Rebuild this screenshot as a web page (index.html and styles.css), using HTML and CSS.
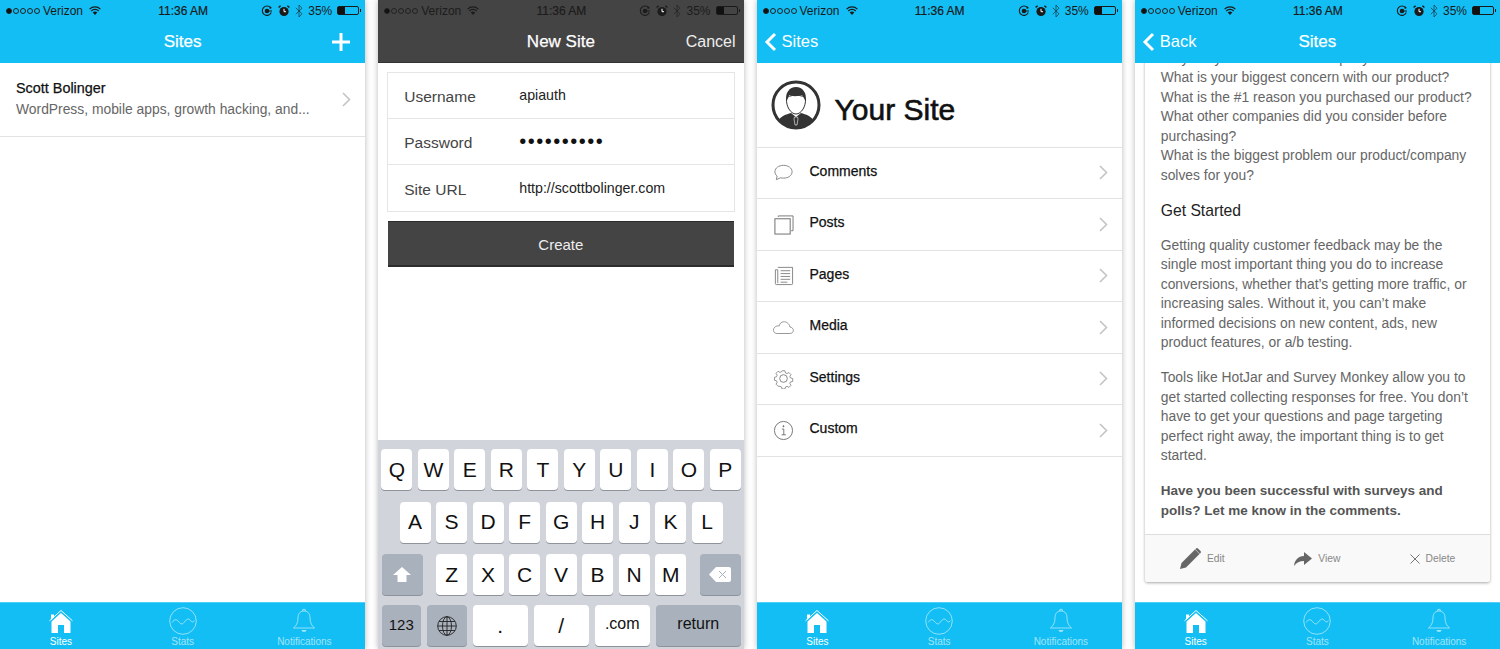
FILE: index.html
```html
<!DOCTYPE html>
<html lang="en">
<head>
  <meta charset="UTF-8">
  <meta name="viewport" content="width=device-width, initial-scale=1.0">
  <title>Site manager app screens</title>
  <link rel="stylesheet" href="styles.css">
</head>
<body>
  <svg class="defs" width="0" height="0">
    <symbol id="wifi" viewBox="0 0 12 9">
      <path d="M.6 3.2a7.6 7.6 0 0 1 10.8 0M2.3 5a5.2 5.2 0 0 1 7.4 0" fill="none" stroke="currentColor" stroke-width="1.2"/>
      <path d="M6 9 3.700 6.600a3.300 3.300 0 0 1 4.600 0z" fill="currentColor"/>
    </symbol>
    <symbol id="lock" viewBox="0 0 12 12">
      <path d="M10.3 7.6A4.7 4.7 0 1 1 9.6 2.6" fill="none" stroke="currentColor" stroke-width="1.1"/>
      <path d="M8.6 1 11 3 8.6 4z" fill="currentColor"/>
      <circle cx="6" cy="6" r="2.3" fill="currentColor"/>
      <path d="M7 6h4" stroke="currentColor" stroke-width="1"/>
    </symbol>
    <symbol id="alarm" viewBox="0 0 12 12">
      <circle cx="6" cy="6.5" r="4.6" fill="currentColor"/>
      <path d="M6 3.8v2.9h2" fill="none" stroke="#fff" stroke-width="1"/>
      <path d="M.6 2.6 2.6.8M11.4 2.6 9.4.8" stroke="currentColor" stroke-width="1.4"/>
    </symbol>
    <symbol id="bluetooth" viewBox="0 0 8 14">
      <path d="M.8 3.800 7 9.800 4 13V1l3 3.200L.8 10.200" fill="none" stroke="currentColor" stroke-width="1" opacity=".6"/>
    </symbol>
    <symbol id="chevron" viewBox="0 0 9 15">
      <path d="M1 1l6.500 6.500L1 14" fill="none" stroke="#c4c4c4" stroke-width="1.600"/>
    </symbol>
    <symbol id="back" viewBox="0 0 13 20">
      <path d="M11 2 3 10l8 8" fill="none" stroke="#fff" stroke-width="3"/>
    </symbol>
    <symbol id="home" viewBox="-2 -2 28 28">
      <path d="M.5 11.800 12 1.500l11.500 10.300" fill="none" stroke="currentColor" stroke-width="1"/>
      <path d="M2 5.500h3v2.800L2 11z" fill="currentColor"/>
      <path d="M12 4 21.500 12.500V24H15v-8H9v8H2.500V12.500z" fill="currentColor"/>
    </symbol>
    <symbol id="stats" viewBox="0 0 28 28">
      <circle cx="14" cy="14" r="13.300" fill="none" stroke="currentColor" stroke-width=".9"/>
      <path d="M3 15.500c2.500-3.500 4.500-3.500 6.500-1s3.500 3.500 5.500 1 4-5 6-2.500 3 2.500 4.500.5" fill="none" stroke="currentColor" stroke-width=".9"/>
    </symbol>
    <symbol id="bell" viewBox="-2 -1 28 28">
      <path d="M12 3C7.500 3 6 6.500 6 10c0 5-2 8-4.500 10h21C20 18 18 15 18 10c0-3.500-1.500-7-6-7z" fill="none" stroke="currentColor" stroke-width=".9"/>
      <path d="M10.800 3a1.300 1.300 0 1 1 2.400 0" fill="none" stroke="currentColor" stroke-width=".9"/>
      <path d="M9.500 22h5a2.500 2 0 0 1-5 0z" fill="currentColor"/>
    </symbol>
  </svg>

  <div class="screens">

    <!-- Sites list -->
    <section class="phone">
      <header class="top">
        <div class="status">
          <div class="status-left"><span class="dots"><i class="on"></i><i></i><i></i><i></i><i></i></span><span>Verizon</span><svg class="ic-wifi"><use href="#wifi"/></svg></div>
          <div class="status-time">11:36 AM</div>
          <div class="status-right"><svg class="ic-s"><use href="#lock"/></svg><svg class="ic-s"><use href="#alarm"/></svg><svg class="ic-bt"><use href="#bluetooth"/></svg><span>35%</span><span class="battery"><b></b></span></div>
        </div>
        <div class="nav">
          <span class="nav-side"></span>
          <span class="nav-title">Sites</span>
          <span class="nav-side right"><svg class="ic-plus" viewBox="0 0 18 18"><path d="M9 0v18M0 9h18" stroke="#fff" stroke-width="3"/></svg></span>
        </div>
      </header>
      <main class="body">
        <div class="site-row">
          <div class="site-text">
            <div class="site-name">Scott Bolinger</div>
            <div class="site-desc">WordPress, mobile apps, growth hacking, and...</div>
          </div>
          <svg class="chevron"><use href="#chevron"/></svg>
        </div>
      </main>
      <nav class="tabs">
        <div class="tab active"><svg class="tab-icon"><use href="#home"/></svg><span>Sites</span></div>
        <div class="tab"><svg class="tab-icon"><use href="#stats"/></svg><span>Stats</span></div>
        <div class="tab"><svg class="tab-icon"><use href="#bell"/></svg><span>Notifications</span></div>
      </nav>
    </section>

    <!-- New site form -->
    <section class="phone">
      <header class="top dark">
        <div class="status">
          <div class="status-left"><span class="dots"><i class="on"></i><i></i><i></i><i></i><i></i></span><span>Verizon</span><svg class="ic-wifi"><use href="#wifi"/></svg></div>
          <div class="status-time">11:36 AM</div>
          <div class="status-right"><svg class="ic-s"><use href="#lock"/></svg><svg class="ic-s"><use href="#alarm"/></svg><svg class="ic-bt"><use href="#bluetooth"/></svg><span>35%</span><span class="battery"><b></b></span></div>
        </div>
        <div class="nav">
          <span class="nav-side"></span>
          <span class="nav-title">New Site</span>
          <span class="nav-side right"><span class="nav-cancel">Cancel</span></span>
        </div>
      </header>
      <main class="body form-body">
        <div class="form-card">
          <div class="form-row"><span class="form-label">Username</span><span class="form-value">apiauth</span></div>
          <div class="form-row"><span class="form-label">Password</span><span class="form-value pass">••••••••••</span></div>
          <div class="form-row"><span class="form-label">Site URL</span><span class="form-value">http://scottbolinger.com</span></div>
        </div>
        <div class="create-btn">Create</div>
      </main>
      <div class="keyboard">
        <div class="kb-row">
          <span class="key">Q</span><span class="key">W</span><span class="key">E</span><span class="key">R</span><span class="key">T</span><span class="key">Y</span><span class="key">U</span><span class="key">I</span><span class="key">O</span><span class="key">P</span>
        </div>
        <div class="kb-row">
          <span class="key">A</span><span class="key">S</span><span class="key">D</span><span class="key">F</span><span class="key">G</span><span class="key">H</span><span class="key">J</span><span class="key">K</span><span class="key">L</span>
        </div>
        <div class="kb-row split">
          <span class="key fn wide"><svg class="kb-shift" viewBox="0 0 18 15"><path d="M9 0 18 8h-4.500v7h-9V8H0z" fill="#fff"/></svg></span>
          <div class="kb-group">
            <span class="key">Z</span><span class="key">X</span><span class="key">C</span><span class="key">V</span><span class="key">B</span><span class="key">N</span><span class="key">M</span>
          </div>
          <span class="key fn wide"><svg class="kb-del" viewBox="0 0 22 15"><path d="M7 0h13a2 2 0 0 1 2 2v11a2 2 0 0 1-2 2H7L0 7.500z" fill="#fff"/><path d="M10 4l7 7M17 4l-7 7" stroke="#a9b1bc" stroke-width="1"/></svg></span>
        </div>
        <div class="kb-row bottom">
          <span class="key fn small k-123">123</span>
          <span class="key fn k-globe"><svg class="kb-globe" viewBox="0 0 20 20" fill="none" stroke="#222" stroke-width=".9"><circle cx="10" cy="10" r="9.300"/><ellipse cx="10" cy="10" rx="4.500" ry="9.300"/><path d="M10 .7v18.600M.7 10h18.600M2 5.500h16M2 14.500h16"/></svg></span>
          <span class="key k-dot">.</span>
          <span class="key k-slash">/</span>
          <span class="key small k-com">.com</span>
          <span class="key fn small k-return">return</span>
        </div>
      </div>
    </section>

    <!-- Site menu -->
    <section class="phone">
      <header class="top">
        <div class="status">
          <div class="status-left"><span class="dots"><i class="on"></i><i></i><i></i><i></i><i></i></span><span>Verizon</span><svg class="ic-wifi"><use href="#wifi"/></svg></div>
          <div class="status-time">11:36 AM</div>
          <div class="status-right"><svg class="ic-s"><use href="#lock"/></svg><svg class="ic-s"><use href="#alarm"/></svg><svg class="ic-bt"><use href="#bluetooth"/></svg><span>35%</span><span class="battery"><b></b></span></div>
        </div>
        <div class="nav">
          <span class="nav-side"><svg class="ic-back"><use href="#back"/></svg><span class="nav-link">Sites</span></span>
          <span class="nav-title"></span>
          <span class="nav-side right"></span>
        </div>
      </header>
      <main class="body">
        <div class="site-head">
          <svg class="avatar" viewBox="0 0 50 50">
            <circle cx="25" cy="25" r="23" fill="#fff" stroke="#333" stroke-width="3"/>
            <path d="M8 40c2-4 7-5.500 12-7l5 4 5-4c5 1.500 10 3 12 7a23 23 0 0 1-34 0z" fill="#333"/>
            <path d="M15.500 19c-.5 7 4 15 9.500 15s10-8 9.500-15c-.5-5-18.500-5-19 0z" fill="#fff" stroke="#333" stroke-width="1"/>
            <path d="M15.500 22c-2-9 3-15 9.500-15s11.500 6 9.500 15c-1-3-2-6-4-7-3 1.500-10 1.500-12 0-1 1-2 4-3 7z" fill="#333"/>
            <path d="M23.500 37h3l.5 2-1 6h-2l-1-6z" fill="#333" stroke="#fff" stroke-width=".6"/>
          </svg>
          <h1 class="site-title">Your Site</h1>
        </div>
        <div class="menu-row">
          <svg class="menu-icon" viewBox="0 0 22 22" fill="none" stroke="#777" stroke-width=".9"><path d="M11 3.500c5 0 9 2.800 9 6.700s-4 6.700-9 6.700c-1 0-2.200-.1-3.200-.4L3.500 18.500l.8-3.800C2.800 13.500 2 12 2 10.200c0-3.900 4-6.700 9-6.700z"/></svg>
          <span class="menu-label">Comments</span>
          <svg class="chevron"><use href="#chevron"/></svg>
        </div>
        <div class="menu-row">
          <svg class="menu-icon" viewBox="0 0 22 22" fill="none" stroke="#777" stroke-width="1"><path d="M5.500 3V2h15.500v15.500h-2"/><rect x="2" y="5" width="16" height="16" stroke-width="1.100"/></svg>
          <span class="menu-label">Posts</span>
          <svg class="chevron"><use href="#chevron"/></svg>
        </div>
        <div class="menu-row">
          <svg class="menu-icon" viewBox="0 0 22 22" fill="none" stroke="#777" stroke-width=".9"><path d="M5 2.500h15.500v17a1 1 0 0 1-1 1H3.500a1 1 0 0 1-1-1V5H5M5 5v14"/><path d="M8 6h10M8 9h10M8 12h10M8 15h10M8 18h7"/></svg>
          <span class="menu-label">Pages</span>
          <svg class="chevron"><use href="#chevron"/></svg>
        </div>
        <div class="menu-row">
          <svg class="menu-icon cloud" viewBox="0 0 22 14" fill="none" stroke="#777" stroke-width=".8"><path d="M4.500 13.300h13c5 0 5-6.300.3-6.800C17 2.500 13.500.7 11 1 8.500 1.300 7 3 6.500 5.300 2.500 5 .4 7.500.5 10c.1 2 1.600 3.300 4 3.300z"/></svg>
          <span class="menu-label">Media</span>
          <svg class="chevron"><use href="#chevron"/></svg>
        </div>
        <div class="menu-row">
          <svg class="menu-icon" viewBox="0 0 22 22" fill="none" stroke="#777" stroke-width=".9"><circle cx="11" cy="11" r="4"/><path d="M9.300 2h3.400l.6 2.500 1.800.8 2.200-1.300 2.400 2.400-1.300 2.200.8 1.800 2.500.6v3.400l-2.500.6-.8 1.800 1.300 2.200-2.400 2.400-2.200-1.300-1.800.8-.6 2.300H9.300l-.6-2.300-1.800-.8L4.700 20l-2.400-2.400 1.300-2.200-.8-1.800-2.300-.6V9.600l2.300-.6.8-1.800L2.300 5l2.400-2.400 2.200 1.300 1.800-.8z" transform="translate(1.100 1.100) scale(.9)"/></svg>
          <span class="menu-label">Settings</span>
          <svg class="chevron"><use href="#chevron"/></svg>
        </div>
        <div class="menu-row">
          <svg class="menu-icon" viewBox="0 0 22 22" fill="none" stroke="#666" stroke-width=".9"><circle cx="11" cy="11" r="9.500"/><circle cx="11" cy="6.500" r=".6" fill="#666"/><path d="M9.300 9.500H11.300V15.500M9 15.500h4.500"/></svg>
          <span class="menu-label">Custom</span>
          <svg class="chevron"><use href="#chevron"/></svg>
        </div>
      </main>
      <nav class="tabs">
        <div class="tab active"><svg class="tab-icon"><use href="#home"/></svg><span>Sites</span></div>
        <div class="tab"><svg class="tab-icon"><use href="#stats"/></svg><span>Stats</span></div>
        <div class="tab"><svg class="tab-icon"><use href="#bell"/></svg><span>Notifications</span></div>
      </nav>
    </section>

    <!-- Post detail -->
    <section class="phone">
      <header class="top">
        <div class="status">
          <div class="status-left"><span class="dots"><i class="on"></i><i></i><i></i><i></i><i></i></span><span>Verizon</span><svg class="ic-wifi"><use href="#wifi"/></svg></div>
          <div class="status-time">11:36 AM</div>
          <div class="status-right"><svg class="ic-s"><use href="#lock"/></svg><svg class="ic-s"><use href="#alarm"/></svg><svg class="ic-bt"><use href="#bluetooth"/></svg><span>35%</span><span class="battery"><b></b></span></div>
        </div>
        <div class="nav">
          <span class="nav-side"><svg class="ic-back"><use href="#back"/></svg><span class="nav-link">Back</span></span>
          <span class="nav-title">Sites</span>
          <span class="nav-side right"></span>
        </div>
      </header>
      <main class="body post-body">
        <article class="post-card">
          <div class="post-text">
            <p>Why did you choose our company?<br>What is your biggest concern with our product?<br>What is the #1 reason you purchased our product?<br>What other companies did you consider before<br>purchasing?<br>What is the biggest problem our product/company<br>solves for you?</p>
            <h2>Get Started</h2>
            <p>Getting quality customer feedback may be the<br>single most important thing you do to increase<br>conversions, whether that’s getting more traffic, or<br>increasing sales. Without it, you can’t make<br>informed decisions on new content, ads, new<br>product features, or a/b testing.</p>
            <p>Tools like HotJar and Survey Monkey allow you to<br>get started collecting responses for free. You don’t<br>have to get your questions and page targeting<br>perfect right away, the important thing is to get<br>started.</p>
            <p><strong>Have you been successful with surveys and<br>polls? Let me know in the comments.</strong></p>
          </div>
          <div class="post-actions">
            <div class="action"><svg class="ic-edit" viewBox="0 0 21 21"><path d="M0 21l1.500-6L15 1.500 19.500 6 6 19.500z" fill="#666"/><path d="M16 .5a1.500 1.500 0 0 1 2 0l2.500 2.500a1.500 1.500 0 0 1 0 2L19.800 5.700 15.300 1.200z" fill="#666"/></svg><span>Edit</span></div>
            <div class="action"><svg class="ic-view" viewBox="0 0 18 14"><path d="M10 0l8 6.500L10 13V9C5.500 9 2.500 10.500 0 14c.5-5.500 4-10 10-10z" fill="#666"/></svg><span>View</span></div>
            <div class="action"><svg class="ic-x" viewBox="0 0 10 10"><path d="M.5.500l9 9M9.500.500l-9 9" stroke="#666" stroke-width=".9"/></svg><span>Delete</span></div>
          </div>
        </article>
      </main>
      <nav class="tabs">
        <div class="tab active"><svg class="tab-icon"><use href="#home"/></svg><span>Sites</span></div>
        <div class="tab"><svg class="tab-icon"><use href="#stats"/></svg><span>Stats</span></div>
        <div class="tab"><svg class="tab-icon"><use href="#bell"/></svg><span>Notifications</span></div>
      </nav>
    </section>

  </div>
</body>
</html>
```

FILE: styles.css
```css
* {
  box-sizing: border-box;
}

html, body {
  margin: 0;
  padding: 0;
  height: 100%;
}

body {
  font-family: "Liberation Sans", Arial, sans-serif;
  background-color: #fff;
  color: #222;
  overflow: hidden;
}

.defs {
  display: block;
  height: 0;
}

.screens {
  display: grid;
  grid-template-columns: repeat(4, 1fr);
  gap: 13px;
  height: 649px;
}

.phone {
  display: flex;
  flex-direction: column;
  height: 649px;
  min-width: 0;
  background: #fff;
  box-shadow: 0 0 6px rgba(0, 0, 0, 0.28);
  overflow: hidden;
}

/* header */
.top {
  flex: none;
  height: 63px;
  background-color: #12bef4;
  color: #fff;
  z-index: 2;
}

.top.dark {
  background-color: #444;
  border-bottom: 1px solid #333;
}

.status {
  display: grid;
  grid-template-columns: 1fr auto 1fr;
  align-items: center;
  height: 21px;
  padding: 0 5px 0 6px;
  font-size: 12px;
  color: #1a1a1a;
}

.dark .status {
  color: #1c1c1c;
}

.status-left {
  display: flex;
  align-items: center;
  gap: 2px;
}

.dots {
  display: flex;
  gap: 1px;
  margin-right: 1px;
}

.dots i {
  width: 6px;
  height: 6px;
  border: 1px solid #222;
  border-radius: 50%;
}

.dots i.on {
  background: #111;
}

.ic-wifi {
  width: 12px;
  height: 9px;
  margin-left: 4px;
}

.status-time {
  -webkit-text-stroke: 0.2px;
}

.status-right {
  display: flex;
  align-items: center;
  justify-content: flex-end;
  gap: 5px;
}

.ic-s {
  width: 12px;
  height: 12px;
}

.ic-bt {
  width: 8px;
  height: 14px;
}

.battery {
  position: relative;
  display: block;
  width: 22px;
  height: 9px;
  border: 1px solid #1a1a1a;
  border-radius: 2px;
  margin-right: 1px;
}

.battery b {
  display: block;
  width: 7px;
  height: 100%;
  background: #111;
}

.battery::after {
  content: "";
  position: absolute;
  right: -3px;
  top: 2px;
  width: 1px;
  height: 3px;
  background: #1a1a1a;
}

.nav {
  display: grid;
  grid-template-columns: 1fr auto 1fr;
  align-items: center;
  height: 42px;
  padding: 0 8px;
  color: #fff;
}

.nav-title {
  font-size: 17px;
  -webkit-text-stroke: 0.25px;
}

.nav-side {
  display: flex;
  align-items: center;
  gap: 5px;
}

.nav-side.right {
  justify-content: flex-end;
}

.ic-plus {
  width: 18px;
  height: 18px;
  margin-right: 7px;
}

.ic-back {
  width: 13px;
  height: 20px;
  margin-left: -1px;
}

.nav-link {
  font-size: 16.500px;
  padding-bottom: 2px;
}

.nav-cancel {
  font-size: 16px;
  color: #eee;
}

.body {
  flex: 1;
  min-height: 0;
  overflow: hidden;
}

/* sites list */
.site-row {
  display: flex;
  align-items: center;
  height: 74px;
  padding: 0 14px 0 16px;
  border-bottom: 1px solid #e2e2e2;
}

.site-text {
  flex: 1;
  padding-bottom: 3px;
}

.site-name {
  font-size: 14.400px;
  color: #111;
  -webkit-text-stroke: 0.25px;
  margin-bottom: 5px;
}

.site-desc {
  font-size: 13.850px;
  color: #666;
}

.chevron {
  flex: none;
  width: 9px;
  height: 15px;
}

/* new site form */
.form-body {
  padding: 9px 9px 0;
}

.form-card {
  border: 1px solid #e5e5e5;
}

.form-row {
  display: flex;
  align-items: center;
  height: 46px;
  padding-left: 16px;
  border-bottom: 1px solid #e5e5e5;
}

.form-row:last-child {
  border-bottom: none;
}

.form-label {
  width: 115px;
  font-size: 15.500px;
  color: #444;
  padding-top: 3px;
}

.form-value {
  font-size: 14.200px;
  color: #222;
  padding-bottom: 1px;
}

.form-value.pass {
  font-size: 20px;
  line-height: 20px;
  letter-spacing: 1.500px;
  color: #111;
}

.create-btn {
  display: flex;
  align-items: center;
  justify-content: center;
  height: 46px;
  margin: 9px 1px 0;
  padding-top: 1px;
  background: #444;
  border-top: 1px solid #2c2c2c;
  border-bottom: 2px solid #2c2c2c;
  font-size: 15px;
  color: #eee;
}

/* keyboard */
.keyboard {
  flex: none;
  height: 209px;
  padding: 9px 3px 0 3.500px;
  background: #d1d5db;
  display: flex;
  flex-direction: column;
  gap: 11.500px;
}

.kb-row {
  display: flex;
  justify-content: center;
  gap: 5.500px;
}

.kb-row.split {
  justify-content: space-between;
}

.kb-group {
  display: flex;
  gap: 5.500px;
}

.kb-row.bottom {
  justify-content: flex-start;
  gap: 6px;
  margin-top: -1.500px;
}

.key {
  flex: none;
  display: flex;
  align-items: center;
  justify-content: center;
  width: 31px;
  height: 41px;
  background: #fff;
  border-radius: 4px;
  box-shadow: 0 1px 0 #8e939b;
  font-size: 21px;
  color: #111;
}

.key.fn {
  background: #a9b1bc;
}

.key.wide {
  width: 41px;
}

.key.small {
  font-size: 15px;
  padding-bottom: 3px;
}

.key.k-com,
.key.k-return {
  font-size: 16px;
}

.k-123 {
  width: 39px;
}

.k-globe {
  width: 40px;
}

.k-dot,
.k-slash,
.k-com {
  width: 55px;
}

.k-return {
  width: 85px;
}

.kb-shift {
  width: 18px;
  height: 15px;
}

.kb-del {
  width: 22px;
  height: 15px;
}

.kb-globe {
  width: 20px;
  height: 20px;
}

/* site menu */
.site-head {
  display: flex;
  align-items: center;
  gap: 14px;
  height: 84.500px;
  padding-left: 14px;
  border-bottom: 1px solid #e2e2e2;
}

.avatar {
  flex: none;
  width: 50px;
  height: 50px;
}

.site-title {
  margin: 0;
  padding-top: 10px;
  font-size: 30px;
  font-weight: normal;
  color: #111;
  -webkit-text-stroke: 0.6px;
}

.menu-row {
  display: flex;
  align-items: center;
  height: 51.500px;
  padding: 0 14px 0 16px;
  border-bottom: 1px solid #e2e2e2;
}

.menu-icon {
  flex: none;
  width: 21px;
  height: 21px;
}

.menu-label {
  flex: 1;
  margin-left: 16px;
  padding-bottom: 4px;
  font-size: 14px;
  color: #111;
  -webkit-text-stroke: 0.25px;
}

/* post detail */
.post-body {
  padding: 0 10px;
}

.post-card {
  margin-top: -14.500px;
  background: #fff;
  border-radius: 0 0 3px 3px;
  box-shadow: 0 1px 3px rgba(0, 0, 0, 0.35);
}

.post-text {
  padding: 0 16px 14px;
  font-size: 13.850px;
  line-height: 19.500px;
  color: #666;
  white-space: nowrap;
}

.post-text p {
  margin: 0 0 15.500px;
}

.post-text p:last-child {
  margin-bottom: 0;
}

.post-text strong {
  font-size: 13.500px;
  color: #555;
}

.post-text h2 {
  margin: 0 0 15.500px;
  font-size: 15.700px;
  font-weight: normal;
  line-height: 19.500px;
  color: #222;
}

.post-actions {
  display: grid;
  grid-template-columns: repeat(3, 1fr);
  height: 48px;
  background: #f9f9f9;
  border-top: 1px solid #ddd;
  border-radius: 0 0 3px 3px;
}

.action {
  display: flex;
  align-items: center;
  justify-content: center;
  gap: 6px;
  font-size: 10.300px;
  color: #888;
}

.ic-edit {
  width: 21px;
  height: 21px;
}

.ic-view {
  width: 18px;
  height: 14px;
}

.ic-x {
  width: 10px;
  height: 10px;
}

/* tabs */
.tabs {
  flex: none;
  display: grid;
  grid-template-columns: repeat(3, 1fr);
  height: 47.500px;
  background-color: #12bef4;
  border-top: 1px solid #4fd0f6;
}

.tab {
  display: flex;
  flex-direction: column;
  align-items: center;
  padding-top: 4px;
  font-size: 10px;
  color: rgba(255, 255, 255, 0.6);
}

.tab.active {
  color: #fff;
}

.tab-icon {
  width: 28px;
  height: 28px;
  margin-bottom: 1px;
}
```
